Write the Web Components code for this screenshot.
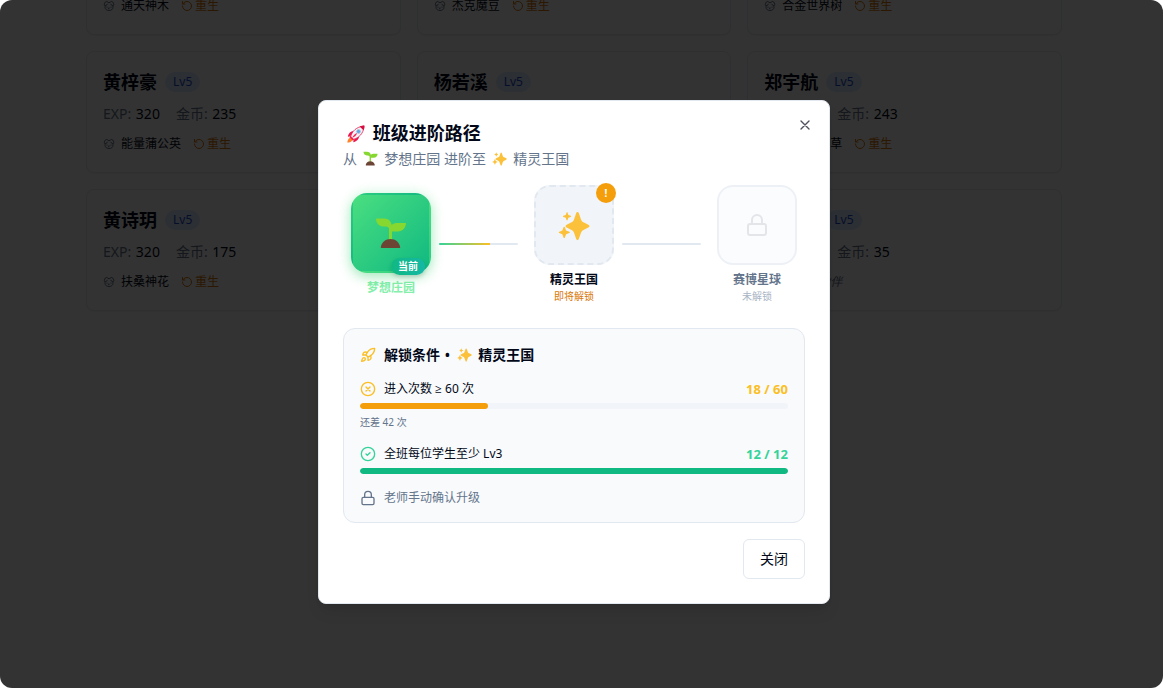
<!DOCTYPE html>
<html lang="zh-CN">
<head>
<meta charset="utf-8">
<meta name="viewport" content="width=device-width, initial-scale=1">
<title>班级进阶路径</title>
<style>
  html, body { margin: 0; height: 100%; background: #fff; }
  body { font-family: "Noto Sans", "Open Sans", "Noto Sans CJK SC", sans-serif; font-size: 14px; line-height: 20px; color: #020817; }
</style>
</head>
<body>
<class-app></class-app>

<template id="t-app">
  <style>
    :host { display: block; position: relative; height: 100vh; overflow: hidden; border-radius: 12px; background: #fff; }
    main { box-sizing: border-box; max-width: 1024px; margin: 0 auto; padding: 0 24px; }
    .page, .overlay { padding-right: 15px; }
    .grid { display: grid; grid-template-columns: repeat(3, 1fr); gap: 16px; margin-top: -19px; }
    .overlay { position: absolute; inset: 0; box-sizing: border-box; display: flex; align-items: center; justify-content: center; padding-top: 16px; background: rgba(0, 0, 0, .8); }
  </style>
  <div class="page">
    <main>
      <div class="grid">
        <student-card pet="通天神木"></student-card>
        <student-card pet="杰克魔豆"></student-card>
        <student-card pet="合金世界树"></student-card>
        <student-card name="黄梓豪" exp="320" coins="235" pet="能量蒲公英"></student-card>
        <student-card name="杨若溪"></student-card>
        <student-card name="郑宇航" exp="320" coins="243" pet="星光含羞草"></student-card>
        <student-card name="黄诗玥" exp="320" coins="175" pet="扶桑神花"></student-card>
        <student-card></student-card>
        <student-card name="陈思远" exp="320" coins="35" empty="未选择伙伴"></student-card>
      </div>
    </main>
  </div>
  <div class="overlay"><path-dialog></path-dialog></div>
</template>

<template id="t-dialog">
  <style>
    :host { display: block; width: 100%; max-width: 512px; }
    section { position: relative; box-sizing: border-box; display: grid; gap: 16px; padding: 24px; border: 1px solid #e2e8f0; border-radius: 8px; background: #fff; box-shadow: 0 10px 15px -3px rgba(0,0,0,.1), 0 4px 6px -4px rgba(0,0,0,.1); }
    header { display: grid; gap: 6px; }
    h2 { display: flex; align-items: center; gap: 4px; height: 18px; margin: 0; font-size: 18px; line-height: 16px; font-weight: 600; --emoji: 18px; }
    h2 span { height: 18px; }
    header p { margin: 0; color: #64748b; }
    .close { position: absolute; top: 16px; right: 16px; display: flex; padding: 0; border: 0; background: none; color: inherit; opacity: .7; }
    .path { display: flex; align-items: center; padding-bottom: 8px; }
    .rules { display: grid; gap: 16px; padding: 16px; border: 1px solid #e2e8f0; border-radius: 12px; background: #f8fafc; }
    h3 { display: flex; align-items: center; gap: 8px; margin: 0; font-size: 14px; line-height: 20px; font-weight: 600; }
    h3 app-icon { color: #fbbf24; }
    .dot { padding: 0 1px; }
    footer { display: flex; justify-content: flex-end; }
    footer button { height: 40px; padding: 0 16px; border: 1px solid #e2e8f0; border-radius: 6px; background: #fff; color: inherit; font: inherit; }
  </style>
  <section role="dialog" aria-labelledby="title">
    <header>
      <h2 id="title"><emoji-icon name="rocket"></emoji-icon><span>班级进阶路径</span></h2>
      <p>从 <emoji-icon name="sprout"></emoji-icon> 梦想庄园 进阶至 <emoji-icon name="sparkles"></emoji-icon> 精灵王国</p>
    </header>
    <button class="close" aria-label="关闭对话框"><app-icon name="x"></app-icon></button>
    <div class="path">
      <path-node state="current">
        <emoji-icon name="sprout"></emoji-icon>
        <span slot="badge">当前</span><span slot="label">梦想庄园</span>
      </path-node>
      <path-link progress="65"></path-link>
      <path-node state="next">
        <emoji-icon name="sparkles"></emoji-icon>
        <span slot="badge">!</span><span slot="label">精灵王国</span><span slot="note">即将解锁</span>
      </path-node>
      <path-link></path-link>
      <path-node state="locked">
        <app-icon name="lock" size="24"></app-icon>
        <span slot="label">赛博星球</span><span slot="note">未解锁</span>
      </path-node>
    </div>
    <div class="rules">
      <h3><app-icon name="rocket"></app-icon><span>解锁条件 <span class="dot">•</span> <emoji-icon name="sparkles"></emoji-icon> 精灵王国</span></h3>
      <unlock-rule state="pending" value="18" max="60" hint="还差 42 次">进入次数 ≥ 60 次</unlock-rule>
      <unlock-rule state="done" value="12" max="12">全班每位学生至少 Lv3</unlock-rule>
      <unlock-rule state="manual">老师手动确认升级</unlock-rule>
    </div>
    <footer><button>关闭</button></footer>
  </section>
</template>

<template id="t-node">
  <style>
    :host { display: flex; flex: none; flex-direction: column; align-items: center; width: 96px; text-align: center; }
    .tile { position: relative; box-sizing: border-box; display: flex; align-items: center; justify-content: center; width: 80px; height: 80px; margin-bottom: 6px; border: 2px solid #e2e8f0; border-radius: 16px; background: #f1f5f9; --emoji: 32px; font-size: 24px; }
    .label { font-size: 12px; line-height: 17px; font-weight: 600; }
    .note { font-size: 10px; line-height: 15px; }
    .badge { position: absolute; font-size: 10px; font-weight: 700; color: #fff; }
    :host([state=current]) .tile { border-color: transparent; background: linear-gradient(135deg, #4ade80, #10b981); box-shadow: 0 4px 12px rgba(34,197,94,.35), 0 0 16px rgba(134,239,172,.2); }
    :host([state=current]) .label { color: #86efac; font-weight: 700; }
    :host([state=current]) .badge { right: 4px; bottom: -4px; padding: 0 7px; border-radius: 9px; line-height: 17px; background: linear-gradient(90deg, #10b981, #14b8a6); box-shadow: 0 2px 4px rgba(0,0,0,.15); }
    :host([state=current]) .note, :host([state=locked]) .badge { display: none; }
    :host([state=next]) .tile { border-style: dashed; }
    :host([state=next]) .badge { top: -4px; right: -4px; width: 20px; border-radius: 10px; line-height: 20px; background: #f59e0b; }
    :host([state=next]) .note { margin-top: 1px; color: #d97706; }
    :host([state=locked]) .tile { border-color: #edf1f6; background: #fbfcfe; color: #e4e5e8; }
    :host([state=locked]) .label { color: #64748b; }
    :host([state=locked]) .note { margin-top: 1px; color: #a9b4c4; }
  </style>
  <div class="tile"><slot></slot><span class="badge"><slot name="badge"></slot></span></div>
  <div class="label"><slot name="label"></slot></div>
  <div class="note"><slot name="note"></slot></div>
</template>

<script>
const stamp = (el, id) => el.attachShadow({ mode: 'open' }).append(document.getElementById(id).content.cloneNode(true));

const ICONS = {
  x: '<path d="M18 6 6 18M6 6l12 12"/>',
  lock: '<rect width="18" height="11" x="3" y="11" rx="2"/><path d="M7 11V7a5 5 0 0 1 10 0v4"/>',
  rocket: '<path d="M4.5 16.5c-1.5 1.26-2 5-2 5s3.74-.5 5-2c.71-.84.7-2.13-.09-2.91a2.18 2.18 0 0 0-2.91-.09z"/><path d="m12 15-3-3a22 22 0 0 1 2-3.95A12.88 12.88 0 0 1 22 2c0 2.72-.78 7.5-6 11a22.35 22.35 0 0 1-4 2z"/><path d="M9 12H4s.55-3.03 2-4c1.62-1.08 5 0 5 0"/><path d="M12 15v5s3.03-.55 4-2c1.08-1.62 0-5 0-5"/>',
  'circle-x': '<circle cx="12" cy="12" r="10"/><path d="m15 9-6 6M9 9l6 6"/>',
  'circle-check': '<circle cx="12" cy="12" r="10"/><path d="m9 12 2 2 4-4"/>',
  rotate: '<path d="M3 12a9 9 0 1 0 9-9 9.75 9.75 0 0 0-6.74 2.74L3 8"/><path d="M3 3v5h5"/>',
  dog: '<path d="M11.25 16.25h1.5L12 17z"/><path d="M16 14v.5M8 14v.5"/><path d="M4.42 11.247A13.152 13.152 0 0 0 4 14.556C4 18.728 7.582 21 12 21s8-2.272 8-6.444a11.702 11.702 0 0 0-.493-3.309"/><path d="M8.5 8.500c-.384 1.050-1.083 2.028-2.344 2.500-1.931.722-3.576-.297-3.656-1-.113-.994 1.177-6.530 4-7 1.923-.321 3.651.845 3.651 2.235A7.497 7.497 0 0 1 14 5.277c0-1.390 1.844-2.598 3.767-2.277 2.823.470 4.113 6.006 4 7-.080.703-1.725 1.722-3.656 1-1.261-.472-1.855-1.450-2.239-2.500"/>'
};
customElements.define('app-icon', class extends HTMLElement {
  connectedCallback() {
    const size = this.getAttribute('size') || 16;
    this.attachShadow({ mode: 'open' }).innerHTML = `<style>:host{display:inline-flex;flex:none}svg{display:block}</style>
      <svg width="${size}" height="${size}" viewBox="0 0 24 24" fill="none" stroke="currentColor" stroke-width="2" stroke-linecap="round" stroke-linejoin="round" aria-hidden="true">${ICONS[this.getAttribute('name')]}</svg>`;
  }
});

const EMOJI = {
  sprout: '<path fill="#86d72f" d="M14 23V11.5C13.500 9.500 11 9.800 8 9.500 4 9 1.500 6.500 1 2.200 1 1.700 1.300 1.500 1.700 1.500H8.500c4.500 0 7.300 2 8.200 6.500C18.300 6.500 20.200 6 22.500 6h7.800c.5 0 .8.300.7.800-.6 4.200-3.300 7.700-8 7.700h-6V23z"/><path fill="#6d4534" d="M6.500 31C5.900 31 5.700 30.600 5.800 30.100 6.500 25.500 10.500 22 15.500 22s9 3.500 9.700 8.100c.1.500-.1.900-.7.900z"/>',
  sparkles: '<path fill="#fcc13b" d="M18.200 4.100c.5-1.500 2.100-1.500 2.600 0l2.200 6.300c.5 1.500 1.500 2.500 3 3l4.300 2.300c1.500.6 1.500 2.200 0 2.800l-4.300 2.300c-1.500.5-2.500 1.500-3 3l-2.200 6.300c-.5 1.500-2.100 1.500-2.600 0l-2.200-6.300c-.5-1.500-1.500-2.500-3-3l-4.300-2.300c-1.500-.6-1.500-2.200 0-2.800l4.300-2.300c1.500-.5 2.500-1.500 3-3zM8.500 3.700c.2-.6.9-.6 1.100 0l.8 2.200 2.300.9c.6.200.6.900 0 1.100l-2.300.9-.8 2.300c-.2.600-.9.600-1.100 0l-.8-2.300-2.300-.9c-.6-.2-.6-.9 0-1.100l2.300-.9zM5.500 18.300c.3-.7 1.100-.7 1.400 0l1.200 3.200 3.200 1.200c.7.300.7 1.100 0 1.400l-3.200 1.200-1.200 3.200c-.3.700-1.100.7-1.400 0l-1.200-3.200-3-1.200c-.7-.3-.7-1.100 0-1.400l3-1.200z"/>',
  rocket: '<path fill="#ff822d" d="M6 22c-3 1-5 4-5.500 9 4 0 8-1.500 9.500-5z"/><path fill="#e8174f" d="M11.500 10.500C6.500 11 3 14.500 1.500 20c0 .8.500 1 1 .8l7-3.300zM21.500 20.500c-.5 5-4 8.500-9.500 10-.8 0-1-.5-.8-1l3.300-7z"/><path fill="#f1f2f6" stroke="#e8174f" stroke-width="1.400" d="M6.500 20.500C9 11 16.500 3.500 29.500 2c.4 0 .8.300.8.700C29 15.500 21 23 11.500 25.500z"/><path fill="#d3103f" d="M22.500 2.700C25.500 1.300 29 1 31 1c0 2-.3 5.500-1.700 8.500z"/><path fill="#f8234f" d="m5.500 18.500 8 8-3 1.500-6.500-6.500zM18 14c-4 1-7 4.500-8.500 8.500C13.500 21 17 18 18 14z"/><circle cx="20.500" cy="11.500" r="3.400" fill="#5fa8e6" stroke="#b4bccb" stroke-width="1.200"/>'
};
customElements.define('emoji-icon', class extends HTMLElement {
  connectedCallback() {
    this.attachShadow({ mode: 'open' }).innerHTML = `<style>:host{display:inline-flex;align-items:center;justify-content:center;flex:none;width:1.43em;height:1em;vertical-align:-2px}svg{display:block;flex:none;width:var(--emoji,15px);height:var(--emoji,15px)}</style>
      <svg viewBox="0 0 32 32" aria-hidden="true">${EMOJI[this.getAttribute('name')]}</svg>`;
  }
});

customElements.define('student-card', class extends HTMLElement {
  connectedCallback() {
    const a = n => this.getAttribute(n);
    this.attachShadow({ mode: 'open' }).innerHTML = `<style>
      :host { display: block; box-sizing: border-box; padding: 16px 16px 20px; border: 1px solid #e2e8f0; border-radius: 8px; background: #fff; box-shadow: 0 1px 2px rgba(0,0,0,.05); }
      .head { display: flex; align-items: center; gap: 8px; margin-bottom: 8px; }
      h3 { margin: 0; font-size: 18px; line-height: 28px; font-weight: 600; }
      .level { padding: 2px 8px; border-radius: 10px; background: #dbeafe; color: #1d4ed8; font-size: 12px; line-height: 16px; }
      .stats { display: flex; gap: 16px; margin-bottom: 12px; color: #64748b; }
      b { margin-left: 1px; font-weight: 400; color: #020817; }
      .pet { display: flex; align-items: center; gap: 12px; font-size: 12px; line-height: 16px; }
      .who { display: flex; align-items: center; gap: 6px; }
      .who app-icon, em { color: #64748b; }
      button { display: flex; align-items: center; gap: 2px; padding: 0; border: 0; background: none; font: inherit; color: #d97706; }
    </style>
    ${a('name') ? `<div class="head"><h3>${a('name')}</h3><span class="level">Lv5</span></div>` : ''}
    ${a('exp') ? `<div class="stats"><span>EXP: <b>${a('exp')}</b></span><span>金币: <b>${a('coins')}</b></span></div>` : ''}
    ${a('pet') ? `<div class="pet"><span class="who"><app-icon name="dog" size="12"></app-icon>${a('pet')}</span><button><app-icon name="rotate" size="12"></app-icon>重生</button></div>` : ''}
    ${a('empty') ? `<div class="pet"><span class="who"><app-icon name="dog" size="12"></app-icon><em>${a('empty')}</em></span></div>` : ''}`;
  }
});

customElements.define('path-node', class extends HTMLElement {
  connectedCallback() { stamp(this, 't-node'); }
});

customElements.define('path-link', class extends HTMLElement {
  connectedCallback() {
    this.attachShadow({ mode: 'open' }).innerHTML = `<style>
      :host { display: block; flex: 1; height: 2px; margin: 0 8px 1px 0; border-radius: 1px; background: #e2e8f0; overflow: hidden; }
      div { width: ${this.getAttribute('progress') || 0}%; height: 100%; background: linear-gradient(90deg, #34d399, #fbbf24); }
    </style><div></div>`;
  }
});

customElements.define('unlock-rule', class extends HTMLElement {
  connectedCallback() {
    const a = n => this.getAttribute(n);
    const icon = { pending: 'circle-x', done: 'circle-check', manual: 'lock' }[a('state')];
    this.attachShadow({ mode: 'open' }).innerHTML = `<style>
      :host { display: grid; gap: 6px; font-size: 12px; line-height: 16px; --tint: #fbbf24; --bar: #f59e0b; }
      :host([state=done]) { --tint: #34d399; --bar: #10b981; }
      :host([state=manual]) { --tint: #64748b; color: #64748b; }
      .row { display: flex; align-items: center; gap: 8px; }
      app-icon, b { color: var(--tint); }
      b { margin-left: auto; font-size: 13px; font-weight: 700; }
      .track { height: 6px; border-radius: 3px; background: #f1f5f9; overflow: hidden; }
      .fill { height: 100%; border-radius: 3px; background: var(--bar); width: ${a('max') ? a('value') / a('max') * 100 : 0}%; }
      small { font-size: 10px; line-height: 15px; color: #64748b; }
    </style>
    <div class="row"><app-icon name="${icon}"></app-icon><span><slot></slot></span>${a('max') ? `<b>${a('value')} / ${a('max')}</b>` : ''}</div>
    ${a('max') ? '<div class="track"><div class="fill"></div></div>' : ''}
    ${a('hint') ? `<small>${a('hint')}</small>` : ''}`;
  }
});

customElements.define('path-dialog', class extends HTMLElement {
  connectedCallback() { stamp(this, 't-dialog'); }
});
customElements.define('class-app', class extends HTMLElement {
  connectedCallback() { stamp(this, 't-app'); }
});
</script>
</body>
</html>
